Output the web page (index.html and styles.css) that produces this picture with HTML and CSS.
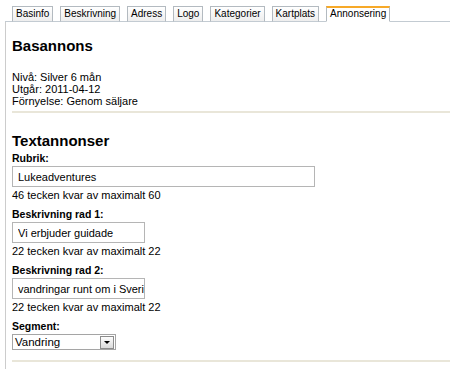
FILE: index.html
```html
<!DOCTYPE html>
<html lang="sv">

<head>
    <meta charset="UTF-8">
    <meta name="viewport" content="width=device-width, initial-scale=1.0">
    <title>Annonsering</title>
    <link rel="stylesheet" href="styles.css">
</head>

<body>
    <ul class="tabs">
        <li class="tab">Basinfo</li>
        <li class="tab">Beskrivning</li>
        <li class="tab">Adress</li>
        <li class="tab">Logo</li>
        <li class="tab">Kategorier</li>
        <li class="tab">Kartplats</li>
        <li class="tab active">Annonsering</li>
    </ul>

    <div class="panel">
        <section class="block">
            <h2>Basannons</h2>
            <p class="info">Nivå: Silver 6 mån<br>Utgår: 2011-04-12<br>Förnyelse: Genom säljare</p>
        </section>

        <section class="block second">
            <h2>Textannonser</h2>
            <form class="ad-form">
                <label for="rubrik">Rubrik:</label>
                <input type="text" id="rubrik" class="wide" value="Lukeadventures">
                <div class="hint">46 tecken kvar av maximalt 60</div>

                <label for="rad1">Beskrivning rad 1:</label>
                <input type="text" id="rad1" class="short" value="Vi erbjuder guidade">
                <div class="hint">22 tecken kvar av maximalt 22</div>

                <label for="rad2">Beskrivning rad 2:</label>
                <input type="text" id="rad2" class="short" value="vandringar runt om i Sverige">
                <div class="hint">22 tecken kvar av maximalt 22</div>

                <label for="segment">Segment:</label>
                <div class="select" id="segment">
                    <span>Vandring</span>
                    <span class="arrow"></span>
                </div>
            </form>
        </section>
    </div>
</body>

</html>
```

FILE: styles.css
```css
body {
    margin: 0;
    font-family: "Liberation Sans", Arial, sans-serif;
    font-size: 11px;
    color: #000;
    background: #fff;
}

.tabs {
    display: flex;
    list-style: none;
    margin: 0 0 0 5px;
    padding: 6px 0 0 7px;
    border-bottom: 1px solid #c3cbd2;
}

.tab {
    padding: 1px 3px;
    margin-right: 7px;
    margin-bottom: -1px;
    font-size: 10px;
    line-height: 12px;
    border: 1px solid #b3bac0;
    border-bottom-color: #c3cbd2;
    background: linear-gradient(#ffffff, #eeeeee);
}

.tab.active {
    border-top: 2px solid #f7a928;
    padding-top: 0;
    background: #fff;
    border-bottom-color: #fff;
}

.panel {
    margin-left: 5px;
    border-left: 1px solid #cccccc;
    padding-left: 6px;
    height: 347px;
}

.block {
    border-bottom: 2px solid #e9e6d9;
    padding-top: 15px;
}

.block.second {
    padding-top: 19px;
}

h2 {
    margin: 0;
    font-size: 15px;
    line-height: 18px;
}

.info {
    margin: 16px 0 0;
    padding-bottom: 4px;
    line-height: 12px;
}

.ad-form {
    padding-bottom: 10px;
}

label {
    display: block;
    font-weight: bold;
    font-size: 10.5px;
    line-height: 12px;
    margin-top: 7px;
}

label:first-child {
    margin-top: 2px;
}

input[type="text"] {
    display: block;
    box-sizing: border-box;
    height: 21px;
    margin: 2px 0;
    padding: 0 0 0 5px;
    border: 1px solid #b5b5b5;
    font-family: inherit;
    font-size: 11px;
    color: #000;
}

.wide {
    width: 303px;
}

.short {
    width: 133px;
}

.hint {
    line-height: 12px;
}

.select {
    display: flex;
    align-items: center;
    justify-content: space-between;
    box-sizing: border-box;
    width: 104px;
    height: 16px;
    margin-top: 2px;
    padding: 0 1px 0 2px;
    border: 1px solid #a5a5a5;
    font-size: 11.5px;
}

.arrow {
    position: relative;
    width: 14px;
    height: 13px;
    box-sizing: border-box;
    border: 1px solid #8c8c8c;
    background: linear-gradient(#fdfdfd, #dadada);
}

.arrow::after {
    content: "";
    position: absolute;
    left: 3px;
    top: 4px;
    border-left: 3px solid transparent;
    border-right: 3px solid transparent;
    border-top: 3px solid #000;
}
```
